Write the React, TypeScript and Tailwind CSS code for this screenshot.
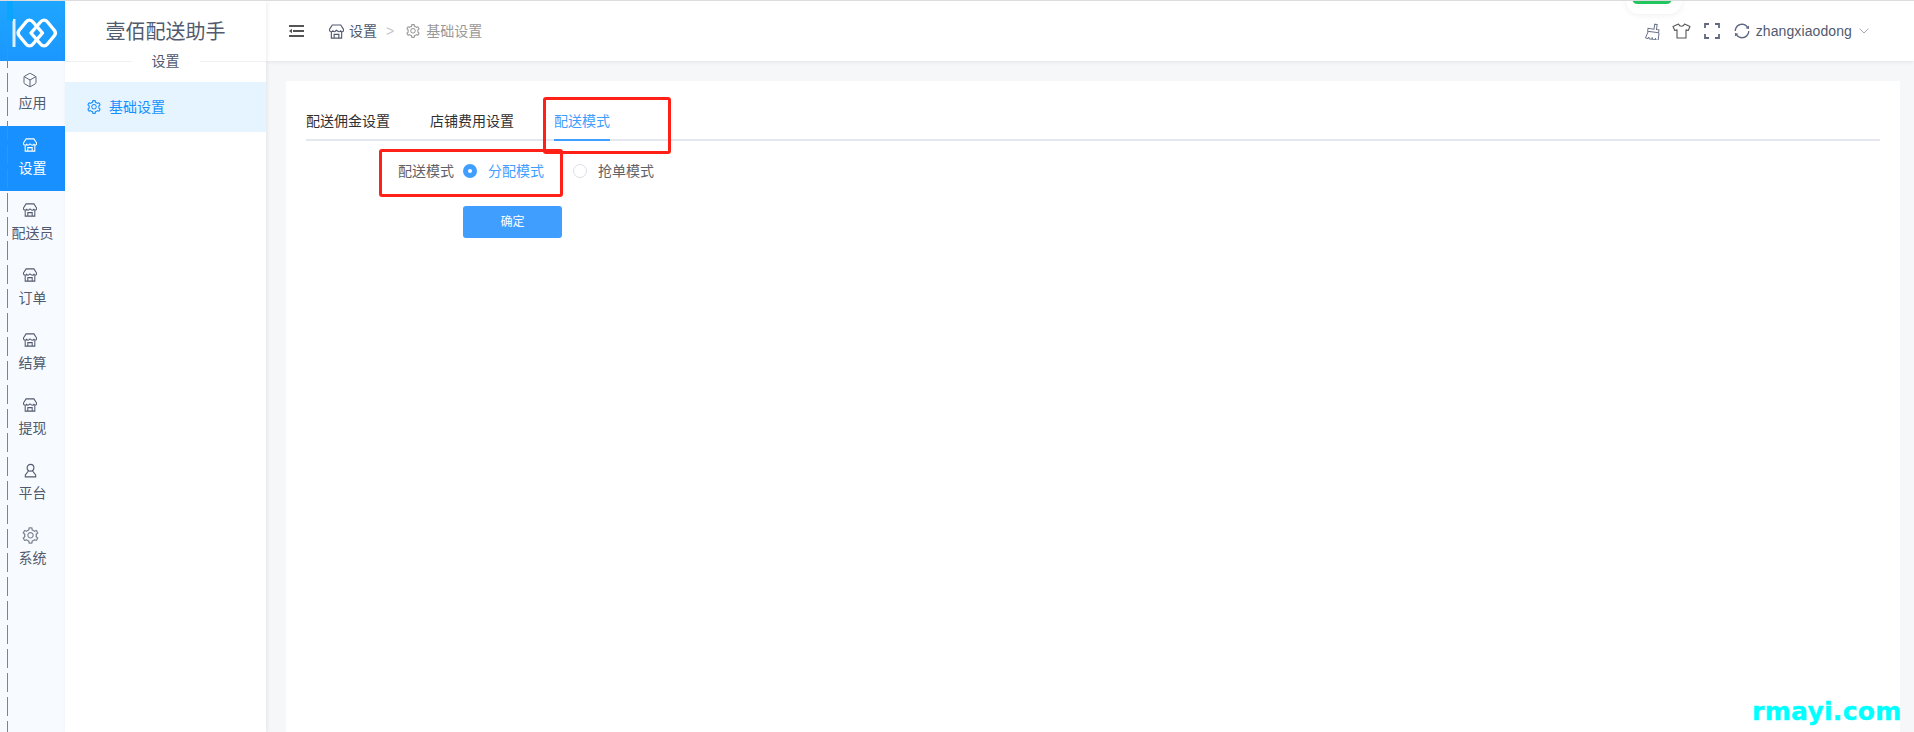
import React from "react";
import { AiOutlineSetting, AiOutlineSync } from "react-icons/ai";
import { Box, ChevronDown } from "lucide-react";

const Store = ({ className = "" }: { className?: string }) => (
  <svg viewBox="0 0 16 16" fill="none" stroke="currentColor" strokeWidth="1.2" className={className}>
    <path d="M3.500 1h9l3 4.700v1c0 .9-.7 1.500-1.600 1.500-.9 0-1.500-.6-1.500-1.500 0 .9-.7 1.500-1.600 1.500S9.200 7.600 8 6.700C6.800 7.600 6.600 8.200 5.700 8.200S4.100 7.600 4.100 6.700c0 .9-.6 1.500-1.500 1.500S.5 7.600.5 6.700v-1z" />
    <path d="M2.500 8.500v6.500h11V8.500M5.500 15v-4h5v4" />
  </svg>
);

const Person = ({ className = "" }: { className?: string }) => (
  <svg viewBox="0 0 16 16" fill="none" stroke="currentColor" strokeWidth="1.200" className={className}>
    <circle cx="8" cy="5" r="3.600" />
    <path d="M5.800 8.500 2.500 12.800v2h11v-2L10.200 8.500" />
  </svg>
);

const Logo = () => (
  <svg viewBox="0 0 65 60" className="h-[60px] w-[65px]" fill="none" stroke="#fff">
    <path d="M14 18v28" strokeWidth="3" opacity="0.85" />
    <path d="M19 29.500 26 21c2-2.500 5-2.500 7 0l9.500 11L33 43c-2 2.500-5 2.500-7 0l-7-8.500c-1.200-1.700-1.200-3.300 0-5z" strokeWidth="3.400" strokeLinejoin="round" />
    <path d="M54.500 29.500 47.500 21c-2-2.500-5-2.500-7 0L31 32l9.500 11c2 2.500 5 2.500 7 0l7-8.500c1.200-1.700 1.200-3.300 0-5z" strokeWidth="3.400" strokeLinejoin="round" />
  </svg>
);

const Broom = () => (
  <svg viewBox="0 0 17 17" fill="none" stroke="#6b7288" strokeWidth="1" className="h-[17px] w-[17px]">
    <path d="M10 1h2.500v5H15v3H4V6h6z" transform="rotate(8 9 6)" />
    <path d="M4 9 1.500 15l2.500.5.800-1.500.2 1.800 2.500.5.700-1.800.3 2 2.500.4.500-1.800.3 2 2.400.2L15 10" />
  </svg>
);

const Tee = () => (
  <svg viewBox="0 0 19 16" fill="none" stroke="#555" strokeWidth="1.100" strokeLinejoin="round" className="h-[16px] w-[19px]">
    <path d="M6.500 1 1 3.500l1.800 4L5 6.700V15h9V6.700l2.200.8L18 3.500 12.500 1c-.6 1.600-1.700 2.300-3 2.300S7.100 2.600 6.500 1z" />
  </svg>
);

const FullScreen = () => (
  <svg viewBox="0 0 16 16" fill="none" stroke="#5f6880" strokeWidth="1.800" className="h-[16px] w-[16px]">
    <path d="M1 5V1h4M11 1h4v4M15 11v4h-4M5 15H1v-4" />
  </svg>
);

const Collapse = () => (
  <svg viewBox="0 0 15 12" className="h-[12px] w-[15px]" fill="#555">
    <rect x="0" y="0" width="15" height="2" />
    <rect x="4" y="5" width="11" height="2" />
    <rect x="0" y="10" width="15" height="2" />
    <path d="M0 6l3-2.200v4.400z" />
  </svg>
);

const railItems: { label: string; icon: "box" | "store" | "person" | "gear"; active?: boolean }[] = [
  { label: "应用", icon: "box" },
  { label: "设置", icon: "store", active: true },
  { label: "配送员", icon: "store" },
  { label: "订单", icon: "store" },
  { label: "结算", icon: "store" },
  { label: "提现", icon: "store" },
  { label: "平台", icon: "person" },
  { label: "系统", icon: "gear" },
];

const RailIcon = ({ icon }: { icon: string }) => {
  if (icon === "box") return <Box className="h-[16px] w-[16px]" strokeWidth={1.400} />;
  if (icon === "store") return <Store className="h-[14px] w-[14px]" />;
  if (icon === "person") return <Person className="h-[15px] w-[15px]" />;
  return <AiOutlineSetting className="h-[19px] w-[19px] text-[#808695]" />;
};

export default function App() {
  return (
    <div
      className="relative flex h-[732px] w-[1914px] overflow-hidden border-t border-[#dcdcdc] bg-[#f5f7f9] text-[14px] text-[#515a6e]"
      style={{ fontFamily: '"Liberation Sans", "Noto Sans CJK SC", sans-serif' }}
    >
      {/* icon rail */}
      <aside className="flex w-[65px] shrink-0 flex-col bg-[#f7fbff]">
        <div className="h-[60px] bg-gradient-to-b from-[#1ea6ff] to-[#1b97ff]">
          <Logo />
        </div>
        {railItems.map((it) => (
          <div
            key={it.label}
            className={`flex h-[65px] flex-col items-center pt-[12px] ${it.active ? "bg-[#1890ff] text-white" : "text-[#515a6e]"}`}
          >
            <span className="mr-[5px] flex h-[14px] items-center">
              <RailIcon icon={it.icon} />
            </span>
            <span className="mt-[6px] whitespace-nowrap leading-[20px]">{it.label}</span>
          </div>
        ))}
      </aside>

      {/* menu sidebar */}
      <aside className="z-10 w-[201px] shrink-0 bg-white shadow-[1px_0_4px_rgba(0,0,0,0.08)]">
        <div className="flex h-[60px] items-start justify-center pt-[17px] text-[20px] leading-[28px]">壹佰配送助手</div>
        <div className="flex h-[21px] items-start">
          <span className="h-px flex-1 bg-[#eef0f3]" />
          <span className="-mt-[10px] px-[20px] leading-[20px]">设置</span>
          <span className="h-px flex-1 bg-[#eef0f3]" />
        </div>
        <div className="flex h-[50px] items-center gap-[7px] bg-[#e6f4ff] pl-[21px] text-[#1890ff]">
          <AiOutlineSetting className="h-[16px] w-[16px]" />
          <span>基础设置</span>
        </div>
      </aside>

      {/* main */}
      <div className="flex min-w-0 flex-1 flex-col">
        <header className="flex h-[60px] shrink-0 items-center bg-white pl-[23px] pr-[42px] shadow-[0_1px_4px_rgba(0,21,41,0.08)]">
          <Collapse />
          <Store className="ml-[25px] h-[15px] w-[15px] text-[#515a6e]" />
          <span className="ml-[5px]">设置</span>
          <span className="ml-[9px] text-[#c5c8ce]">&gt;</span>
          <AiOutlineSetting className="ml-[11px] h-[16px] w-[16px] text-[#999]" />
          <span className="ml-[5px] text-[#999]">基础设置</span>
          <div className="ml-auto flex items-center">
            <Broom />
            <span className="ml-[11px]"><Tee /></span>
            <span className="ml-[13px]"><FullScreen /></span>
            <AiOutlineSync className="ml-[13px] h-[18px] w-[18px] text-[#5f6880]" />
            <span className="ml-[5px] tracking-[0.1px] text-[#515a6e]">zhangxiaodong</span>
            <ChevronDown className="ml-[4px] h-[16px] w-[16px] text-[#808695]" strokeWidth={1.100} />
          </div>
        </header>

        <main className="flex-1 pl-[20px] pr-[14px] pt-[20px]">
          <div className="h-full bg-white px-[20px]">
            <div className="flex h-[60px] gap-[40px] border-b-2 border-[#e4e7ed] text-[#303133]">
              <div className="h-[60px] pt-[30px] leading-[20px]">配送佣金设置</div>
              <div className="h-[60px] pt-[30px] leading-[20px]">店铺费用设置</div>
              <div className="h-[60px] border-b-2 border-[#409eff] pt-[30px] leading-[20px] text-[#409eff]">配送模式</div>
            </div>
            <div className="mt-[20px] flex h-[20px] items-center leading-[20px]">
              <span className="w-[148px] text-right text-[#606266]">配送模式</span>
              <span className="ml-[9px] flex h-[14px] w-[14px] items-center justify-center rounded-full bg-[#409eff]">
                <span className="h-[4px] w-[4px] rounded-full bg-white" />
              </span>
              <span className="ml-[11px] text-[#409eff]">分配模式</span>
              <span className="ml-[29px] h-[14px] w-[14px] rounded-full border border-[#dcdfe6] bg-white" />
              <span className="ml-[11px] text-[#606266]">抢单模式</span>
            </div>
            <button className="ml-[157px] mt-[25px] flex h-[32px] w-[99px] items-center justify-center rounded-[3px] bg-[#409eff] text-[12px] text-white">
              确定
            </button>
          </div>
        </main>
      </div>

      {/* overlays on the screenshot */}
      <svg className="pointer-events-none absolute left-[7px] top-0 h-[732px] w-[1px]" viewBox="0 0 1 732">
        <line x1="0.500" y1="0" x2="0.500" y2="732" stroke="#1e9fff" strokeWidth="1" strokeDasharray="19 5" />
      </svg>
      <div className="pointer-events-none absolute left-[7px] top-0 h-[20px] w-[6px] bg-[#0aa5ff]" />
      <div className="pointer-events-none absolute left-[1626px] -top-[13px] h-[26px] w-[56px] rounded-full bg-white shadow-[0_1px_6px_rgba(0,0,0,0.07)]" />
      <div className="pointer-events-none absolute left-[1632px] -top-[8px] h-[11px] w-[40px] rounded-full bg-[#22c55e]" />
      <div className="pointer-events-none absolute left-[543px] top-[96px] h-[57px] w-[128px] rounded-[3px] border-[3px] border-[#ff2018]" />
      <div className="pointer-events-none absolute left-[379px] top-[148px] h-[48px] w-[184px] rounded-[3px] border-[3px] border-[#ff2018]" />
      <div
        className="pointer-events-none absolute left-[1752px] top-[696px] text-[25px] font-bold leading-[30px] tracking-[0.3px] text-[#00ffff] [-webkit-text-stroke:0.4px_#00ffff]"
        style={{ fontFamily: '"DejaVu Sans", sans-serif' }}
      >
        rmayi.com
      </div>
    </div>
  );
}
